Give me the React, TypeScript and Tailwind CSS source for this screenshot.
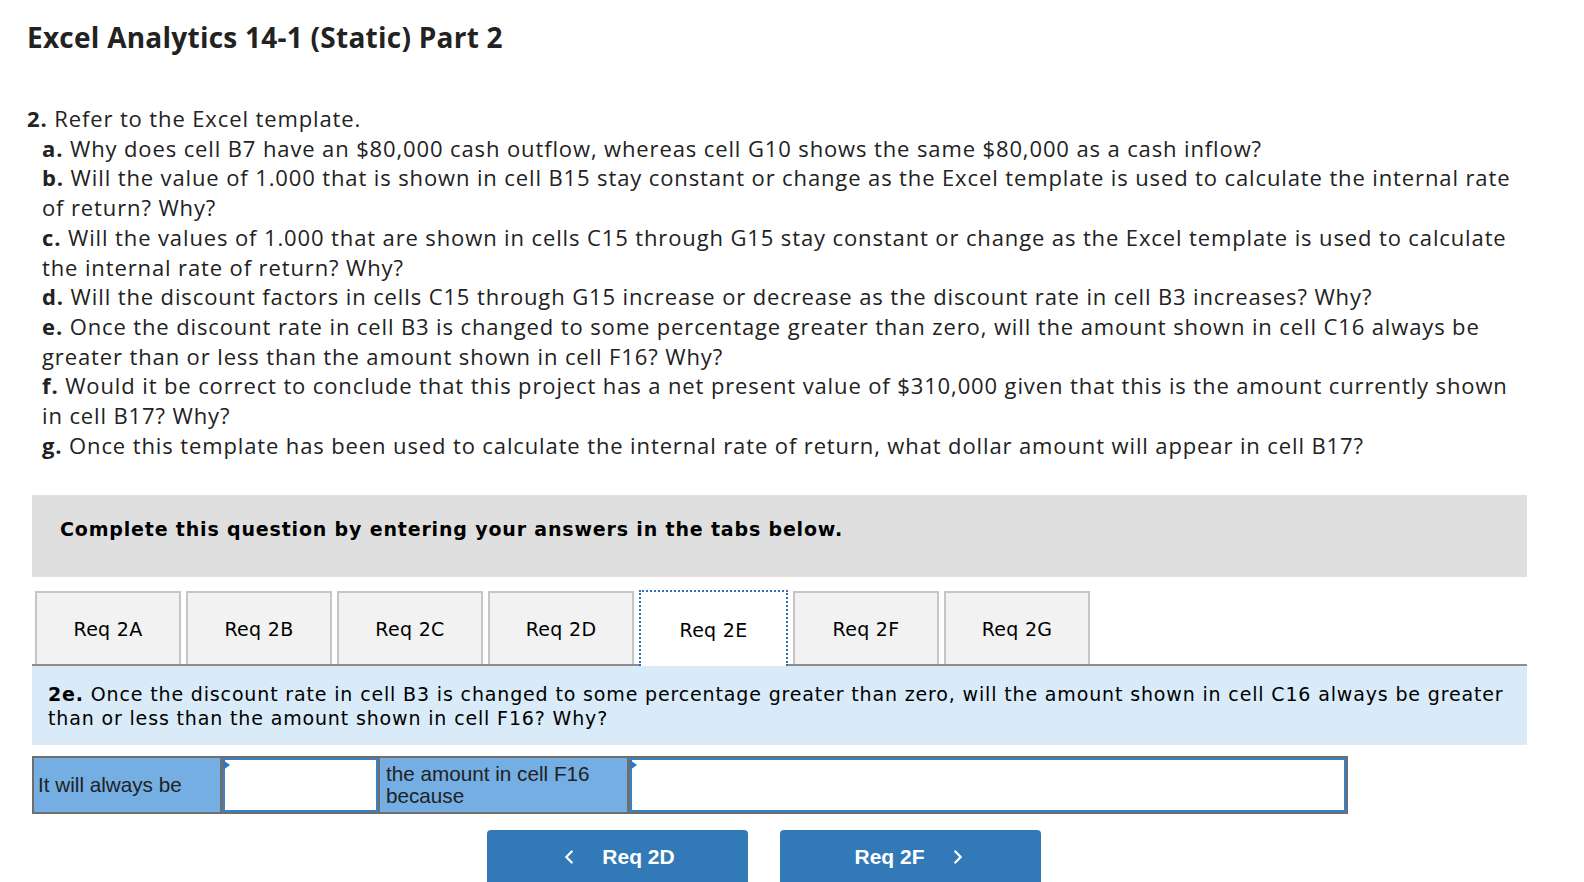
import { ChevronLeft, ChevronRight } from 'lucide-react'

const body = "font-['Open_Sans','Lato',sans-serif]"
const verdana = "font-['DejaVu_Sans','Verdana',sans-serif]"
const arial = "font-['Liberation_Sans','Arial',sans-serif]"

const items: [string, string][] = [
  ['a.', 'Why does cell B7 have an $80,000 cash outflow, whereas cell G10 shows the same $80,000 as a cash inflow?'],
  ['b.', 'Will the value of 1.000 that is shown in cell B15 stay constant or change as the Excel template is used to calculate the internal rate of return? Why?'],
  ['c.', 'Will the values of 1.000 that are shown in cells C15 through G15 stay constant or change as the Excel template is used to calculate the internal rate of return? Why?'],
  ['d.', 'Will the discount factors in cells C15 through G15 increase or decrease as the discount rate in cell B3 increases? Why?'],
  ['e.', 'Once the discount rate in cell B3 is changed to some percentage greater than zero, will the amount shown in cell C16 always be greater than or less than the amount shown in cell F16? Why?'],
  ['f.', 'Would it be correct to conclude that this project has a net present value of $310,000 given that this is the amount currently shown in cell B17? Why?'],
  ['g.', 'Once this template has been used to calculate the internal rate of return, what dollar amount will appear in cell B17?'],
]

const tabs = ['Req 2A', 'Req 2B', 'Req 2C', 'Req 2D', 'Req 2E', 'Req 2F', 'Req 2G']
const ACTIVE = 'Req 2E'

// small blue marker in the top-left corner of an answer cell
function Marker() {
  return (
    <span className="absolute left-0 top-0 h-0 w-0 border-y-[5px] border-l-[7px] border-y-transparent border-l-[#2f78c0]" />
  )
}

export default function App() {
  return (
    <div className="h-[882px] overflow-hidden bg-white pl-[27px] pr-[57px] text-[#222]">
      <h1 className={`${body} pt-[19px] text-[28px] font-bold leading-[36px] tracking-[0.25px]`}>
        Excel Analytics 14-1 (Static) Part 2
      </h1>

      <div className={`${body} mr-[12px] mt-[49px] text-[22px] leading-[29.7px] tracking-[0.88px]`}>
        <p>
          <b>2.</b> Refer to the Excel template.
        </p>
        {items.map(([k, t]) => (
          <p key={k} className="pl-[15px]">
            <b>{k}</b> {t}
          </p>
        ))}
      </div>

      <div className="ml-[5px] mt-[35px]">
        {/* instruction banner */}
        <div className="flex h-[82px] items-center bg-[#dfdfdf] pl-[28px]">
          <p className={`${verdana} -mt-[14px] text-[19px] font-bold tracking-[0.83px] text-black`}>
            Complete this question by entering your answers in the tabs below.
          </p>
        </div>

        {/* tabs */}
        <div className="mt-[13px] flex items-end gap-[5px] border-b-2 border-[#8c8c8c] pl-[3px]">
          {tabs.map((t) =>
            t === ACTIVE ? (
              <div
                key={t}
                className={`${verdana} relative -mb-[2px] flex h-[76px] w-[149px] items-center justify-center border-2 border-b-0 border-dotted border-[#2f6fb5] bg-white pt-[1px] text-[19px] tracking-[0.3px] text-black`}
              >
                {t}
              </div>
            ) : (
              <div
                key={t}
                className={`${verdana} flex h-[73px] w-[146px] items-center justify-center border-2 border-b-0 border-[#c6c6c6] bg-[#f2f2f2] text-[19px] tracking-[0.3px] text-black`}
              >
                {t}
              </div>
            ),
          )}
        </div>

        {/* question prompt */}
        <div className={`${verdana} h-[79px] bg-[#d9ebf9] px-[16px] pt-[16px] text-[19px] leading-[24px] tracking-[0.85px] text-black`}>
          <b>2e.</b> Once the discount rate in cell B3 is changed to some percentage greater than zero, will the amount shown in cell C16 always be greater than or less than the amount shown in cell F16? Why?
        </div>

        {/* answer row */}
        <div className={`${arial} mt-[11px] flex h-[58px] w-[1316px] border-2 border-[#6e6e6e] text-[20.7px] leading-[22px] text-[#222]`}>
          <div className="flex w-[186px] items-center bg-[#74aee2] pl-[4px]">It will always be</div>
          <div className="relative w-[158px] border-2 border-l-[3px] border-[#3a82c8] border-l-[#6e6e6e] bg-white">
            <span className="absolute inset-0 border-l-2 border-[#3a82c8]" />
            <Marker />
          </div>
          <div className="flex w-[249px] flex-col justify-center border-l-2 border-[#6e6e6e] bg-[#74aee2] pl-[6px]">
            <span>the amount in cell F16</span>
            <span>because</span>
          </div>
          <div className="relative flex-1 border-2 border-l-[3px] border-[#3a82c8] border-l-[#6e6e6e] bg-white">
            <span className="absolute inset-0 border-l-2 border-[#3a82c8]" />
            <Marker />
          </div>
        </div>

        {/* navigation */}
        <div className={`${arial} ml-[455px] mt-[16px] flex gap-[32px] text-[21px] font-bold text-white`}>
          <button className="flex h-[56px] w-[261px] shrink-0 items-center justify-center gap-[22px] rounded-t-[4px] bg-[#3279b7] pb-[3px] pr-[2px]">
            <ChevronLeft size={22} strokeWidth={2.5} />
            <span>Req 2D</span>
          </button>
          <button className="flex h-[56px] w-[261px] shrink-0 items-center justify-center gap-[22px] rounded-t-[4px] bg-[#3279b7] pb-[3px] pl-[2px]">
            <span>Req 2F</span>
            <ChevronRight size={22} strokeWidth={2.5} />
          </button>
        </div>
      </div>
    </div>
  )
}
